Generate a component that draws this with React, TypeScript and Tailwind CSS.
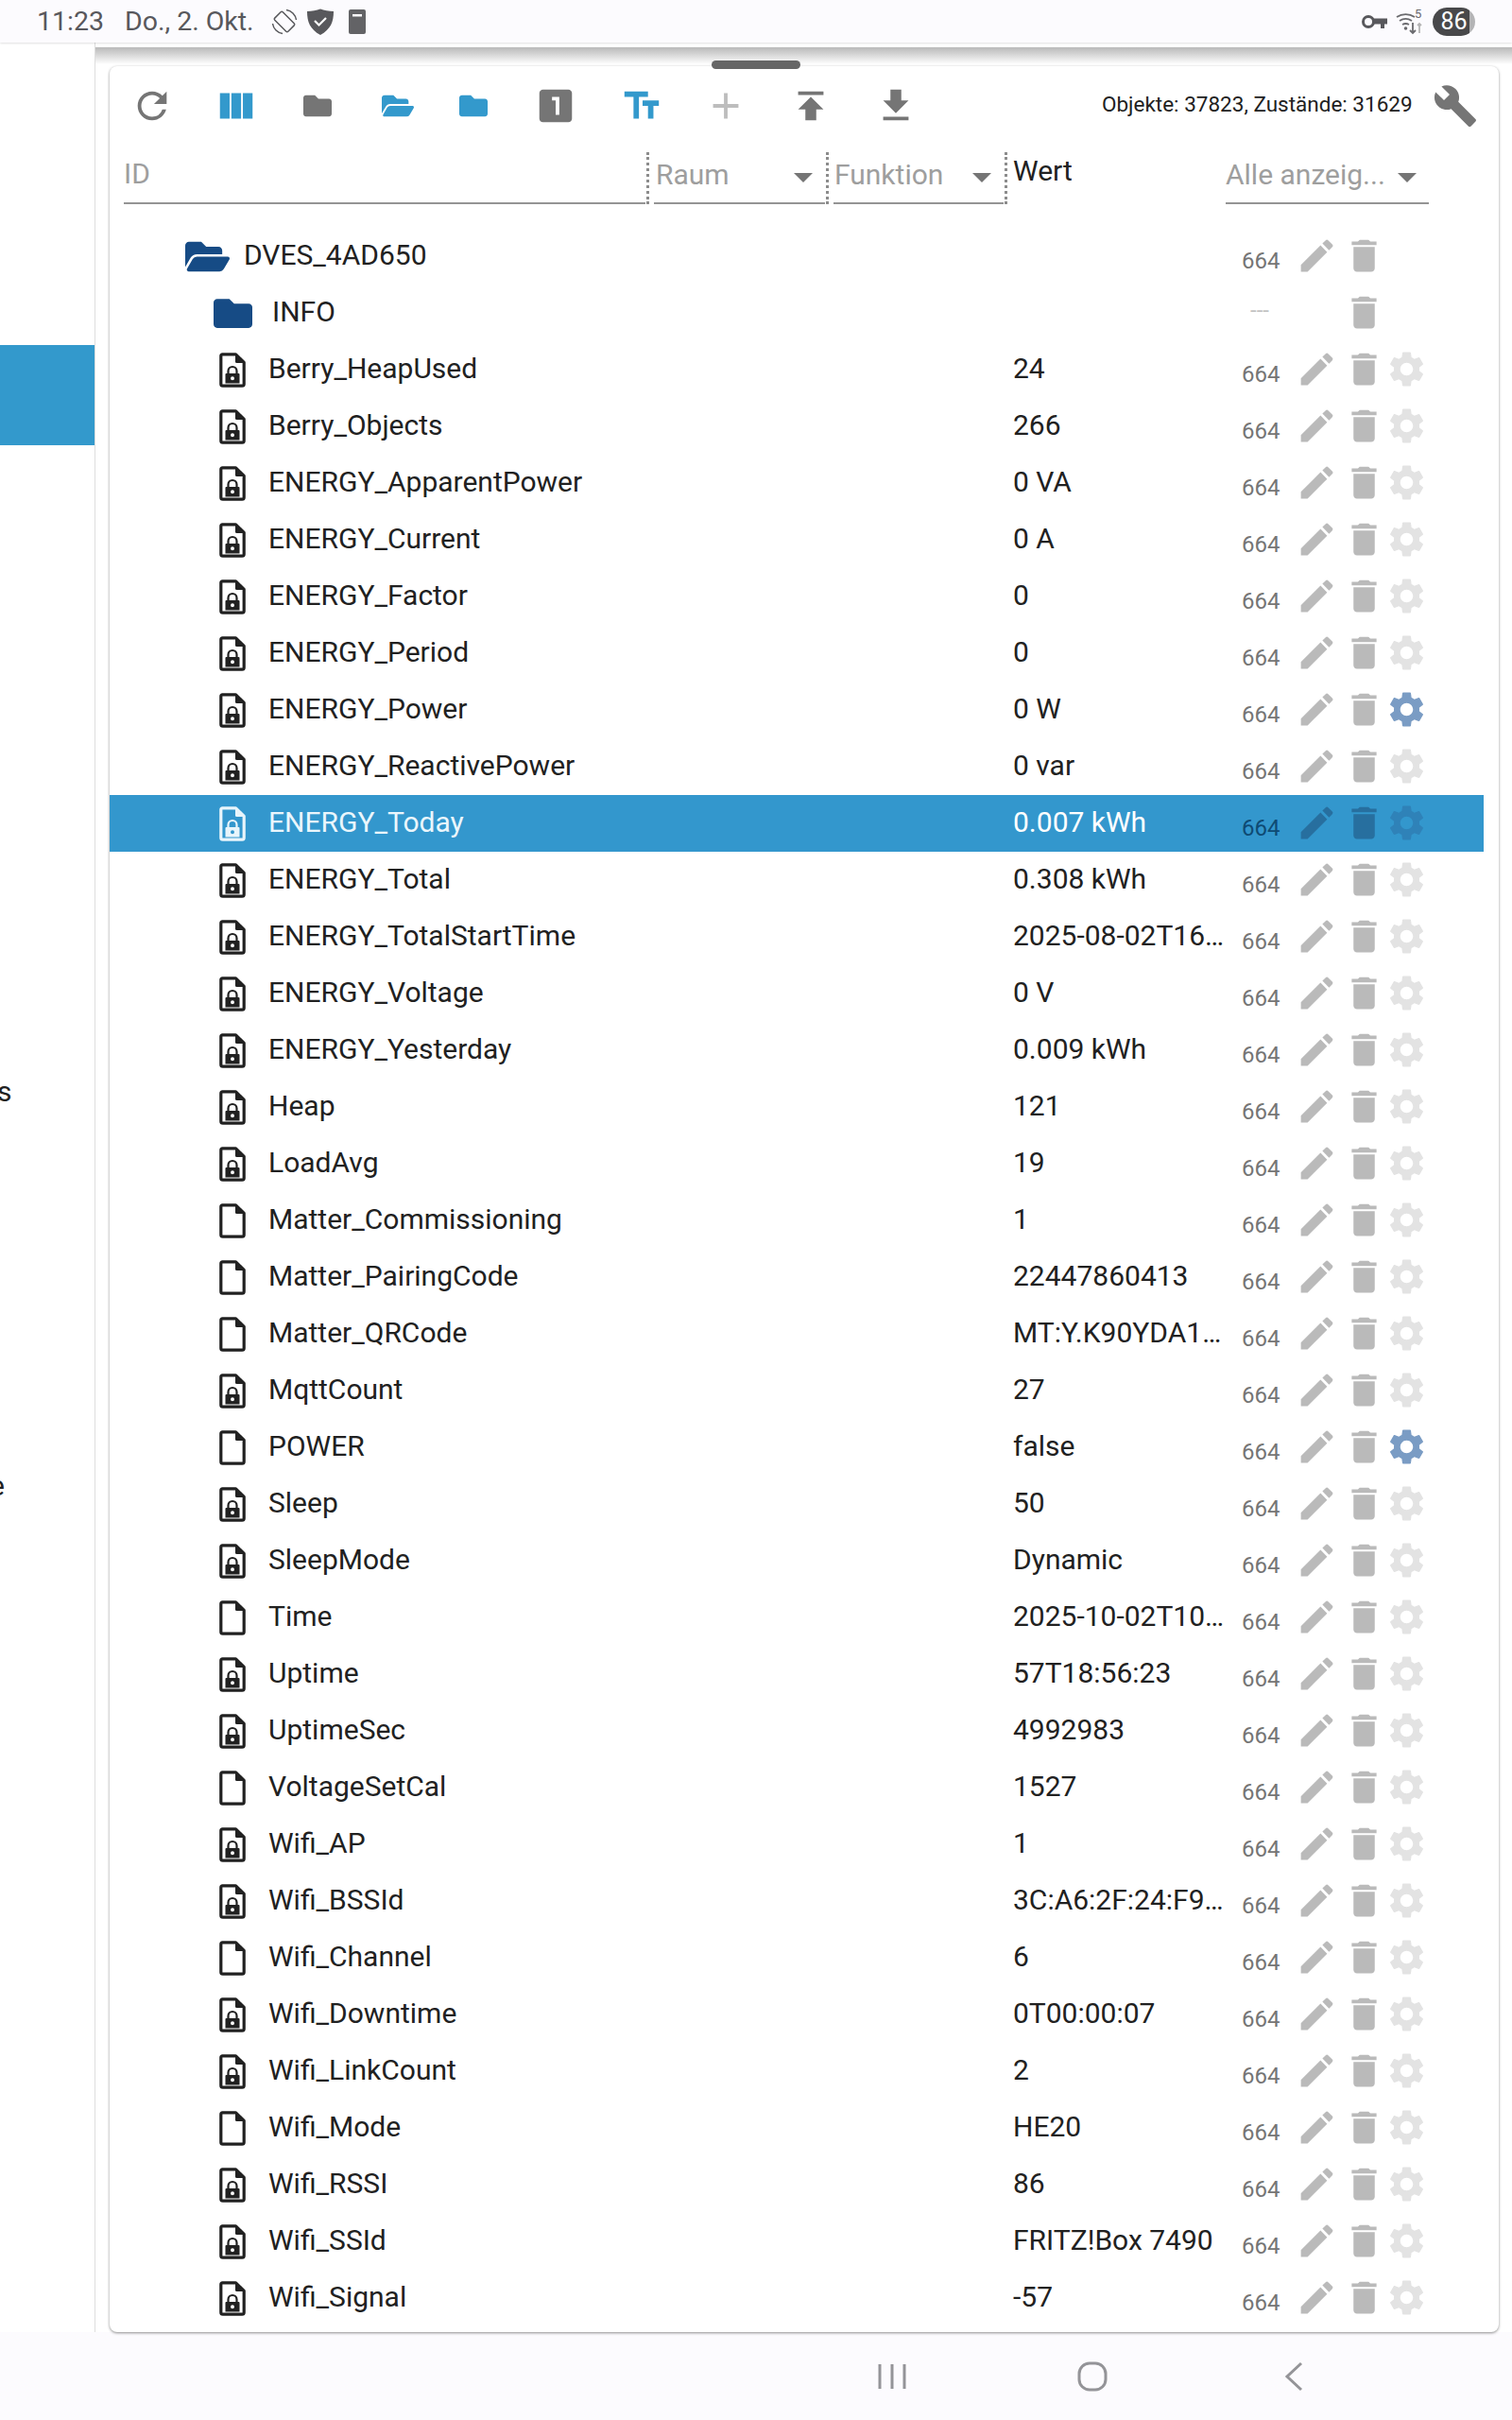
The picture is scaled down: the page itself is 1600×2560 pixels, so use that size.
import React from "react";
import { FaFolder, FaFolderOpen } from "react-icons/fa";
import {
  MdRefresh,
  MdViewColumn,
  MdLooksOne,
  MdTextFields,
  MdAdd,
  MdPublish,
  MdGetApp,
  MdBuild,
  MdEdit,
  MdDelete,
  MdSettings,
} from "react-icons/md";

type Row = { name: string; value: string; locked?: boolean; active?: boolean; selected?: boolean };

const rows: Row[] = [
  { name: "Berry_HeapUsed", value: "24", locked: true },
  { name: "Berry_Objects", value: "266", locked: true },
  { name: "ENERGY_ApparentPower", value: "0 VA", locked: true },
  { name: "ENERGY_Current", value: "0 A", locked: true },
  { name: "ENERGY_Factor", value: "0", locked: true },
  { name: "ENERGY_Period", value: "0", locked: true },
  { name: "ENERGY_Power", value: "0 W", locked: true, active: true },
  { name: "ENERGY_ReactivePower", value: "0 var", locked: true },
  { name: "ENERGY_Today", value: "0.007 kWh", locked: true, selected: true },
  { name: "ENERGY_Total", value: "0.308 kWh", locked: true },
  { name: "ENERGY_TotalStartTime", value: "2025-08-02T16:21:07", locked: true },
  { name: "ENERGY_Voltage", value: "0 V", locked: true },
  { name: "ENERGY_Yesterday", value: "0.009 kWh", locked: true },
  { name: "Heap", value: "121", locked: true },
  { name: "LoadAvg", value: "19", locked: true },
  { name: "Matter_Commissioning", value: "1" },
  { name: "Matter_PairingCode", value: "22447860413" },
  { name: "Matter_QRCode", value: "MT:Y.K90YDA10KL00000000" },
  { name: "MqttCount", value: "27", locked: true },
  { name: "POWER", value: "false", active: true },
  { name: "Sleep", value: "50", locked: true },
  { name: "SleepMode", value: "Dynamic", locked: true },
  { name: "Time", value: "2025-10-02T10:23:41" },
  { name: "Uptime", value: "57T18:56:23", locked: true },
  { name: "UptimeSec", value: "4992983", locked: true },
  { name: "VoltageSetCal", value: "1527" },
  { name: "Wifi_AP", value: "1", locked: true },
  { name: "Wifi_BSSId", value: "3C:A6:2F:24:F9:1D", locked: true },
  { name: "Wifi_Channel", value: "6" },
  { name: "Wifi_Downtime", value: "0T00:00:07", locked: true },
  { name: "Wifi_LinkCount", value: "2", locked: true },
  { name: "Wifi_Mode", value: "HE20" },
  { name: "Wifi_RSSI", value: "86", locked: true },
  { name: "Wifi_SSId", value: "FRITZ!Box 7490", locked: true },
  { name: "Wifi_Signal", value: "-57", locked: true },
];

function FileIcon({ locked, color }: { locked?: boolean; color: string }) {
  return (
    <svg width="28" height="37" viewBox="0 0 28 37" fill="none" className="shrink-0">
      <path d="M3.5 1.8H17.5L26.2 10.5V33.2a2 2 0 0 1-2 2H3.8a2 2 0 0 1-2-2V3.5a1.8 1.8 0 0 1 1.7-1.7z" stroke={color} strokeWidth="3.2" strokeLinejoin="round" />
      <path d="M17 2.5L25.5 11H18.5a1.5 1.5 0 0 1-1.5-1.5z" fill={color} />
      {locked && (
        <g>
          <path d="M9.500 23v-3.500a4.500 4.500 0 0 1 9 0V23" stroke={color} strokeWidth="2.200" />
          <path fillRule="evenodd" clipRule="evenodd" d="M7.500 22h13a1 1 0 0 1 1 1v9.500h-15V23a1 1 0 0 1 1-1zM14 25.200a2 2 0 1 0 0 4a2 2 0 1 0 0-4z" fill={color} />
        </g>
      )}
    </svg>
  );
}

function RowIcons({ selected, active, pencil = true, gear = true }: { selected?: boolean; active?: boolean; pencil?: boolean; gear?: boolean }) {
  const pencilColor = selected ? "text-[#276f9f]" : "text-[#bababa]";
  const gearColor = selected ? "text-[#2f82b8]" : active ? "text-[#7a9cc4]" : "text-[#e3e3e3]";
  return (
    <div className="flex items-center pb-[2px]">
      <div className="w-[50px] h-[45px] shrink-0">{pencil && <MdEdit size={45} className={pencilColor} />}</div>
      <div className="w-[45px] h-[45px] shrink-0">
        <MdDelete size={45} className={pencilColor} />
      </div>
      <div className="w-[45px] h-[45px] shrink-0">{gear && <MdSettings size={45} className={gearColor} />}</div>
    </div>
  );
}

function StateRow({ row }: { row: Row }) {
  const sel = row.selected;
  return (
    <div className={`flex items-center h-[60px] w-[1454px] ${sel ? "bg-[#3397cd]" : ""}`}>
      <div className={`flex items-center w-[956px] pl-[116px] gap-[24px] text-[30px] ${sel ? "text-[#eaf6fc]" : "text-[#212121]"}`}>
        <FileIcon locked={row.locked} color={sel ? "#e8f5fb" : "#212121"} />
        <span className="pb-[3px]">{row.name}</span>
      </div>
      <div className={`w-[228px] pb-[3px] truncate text-[30px] ${sel ? "text-[#ffffff]" : "text-[#212121]"}`}>{row.value}</div>
      <div className={`w-[71px] pl-[14px] pt-[10px] text-[24px] ${sel ? "text-[#0e4a73]" : "text-[#757575]"}`}>664</div>
      <RowIcons selected={sel} active={row.active} />
    </div>
  );
}

function FilterArrow() {
  return <div className="w-0 h-0 border-l-[10px] border-r-[10px] border-t-[10px] border-l-transparent border-r-transparent border-t-[#757575]" />;
}

function Dots() {
  return <div className="w-[3px] h-[55px] border-l-[3px] border-dotted border-[#8c8c8c] shrink-0 ml-[1px] mr-[5px]" />;
}

export default function App() {
  return (
    <div className="relative flex flex-col w-[1600px] h-[2560px] overflow-hidden bg-white font-['Roboto',sans-serif]">
      <div className="relative z-20 flex items-center h-[45px] shrink-0 bg-[#fcfbfe] text-[#58585c] shadow-[0_1px_2px_rgba(0,0,0,0.12)]">
        <span className="ml-[39px] text-[28.5px] leading-[45px]">11:23</span>
        <span className="ml-[22px] text-[28.5px] leading-[45px]">Do., 2. Okt.</span>
        <svg width="28" height="28" viewBox="0 0 28 28" fill="none" stroke="#58585c" strokeWidth="1.5" className="ml-[18px]">
          <rect x="8" y="4" width="12" height="20" rx="1.500" transform="rotate(-45 14 14)" />
          <path d="M16 1.500a12.500 12.500 0 0 1 10.500 10.500M12 26.500A12.500 12.500 0 0 1 1.500 16" />
        </svg>
        <svg width="28" height="28" viewBox="0 0 28 28" className="ml-[10px]">
          <path d="M14 0.500C18 2 23 3 28 3c0 11-3 19-14 25C3 22 0 14 0 3 5 3 10 2 14 0.500z" fill="#58585c" />
          <path d="M8 13l4.500 4.500L20 10" fill="none" stroke="#ffffff" strokeWidth="2.200" />
        </svg>
        <svg width="18" height="26" viewBox="0 0 18 26" className="ml-[16px]">
          <path d="M2 0h14a2 2 0 0 1 2 2v22a2 2 0 0 1-2 2H2a2 2 0 0 1-2-2V2a2 2 0 0 1 2-2z" fill="#636366" />
          <rect x="4" y="5" width="10" height="2.500" fill="#fcfbfe" />
        </svg>
        <div className="ml-auto flex items-center">
          <svg width="27" height="16" viewBox="0 0 27 16" fill="none" className="mr-[9px]">
            <circle cx="7" cy="8" r="5.500" stroke="#58585c" strokeWidth="3" />
            <path d="M12 4.500H27V10.500H24V15H20V10.500H12z" fill="#58585c" />
          </svg>
          <svg width="30" height="30" viewBox="0 0 30 30" fill="none" stroke="#6a6a6e" strokeWidth="1.800" className="mr-[9px]">
            <path d="M1 10a17 17 0 0 1 19 0M4 14a12 12 0 0 1 13 0M7 18a7 7 0 0 1 7 0" />
            <circle cx="10.500" cy="22" r="1.800" fill="#6a6a6e" stroke="none" />
            <path d="M18 16v11M15 24l3 3 3-3" />
            <path d="M25 27V17M23 19l2-2 2 2" stroke="#b5b5b5" />
            <text x="20" y="11" fontSize="13" fill="#6a6a6e" stroke="none" fontFamily="Roboto">5</text>
          </svg>
          <div className="w-[45px] h-[30px] mr-[39px] rounded-[15px] bg-[linear-gradient(90deg,#48484a_86%,#b4b4b6_86%)] text-[#ffffff] text-[25px] leading-[30px] text-center">86</div>
        </div>
      </div>

      <div className="flex flex-1 min-h-0 relative">
        <div className="w-[101px] shrink-0 border-r-[1.5px] border-[#dedede] overflow-hidden text-[30px] text-[#212121] leading-[36px]">
          <div className="h-[106px] mt-[320px] bg-[#3399cc]" />
          <div className="mt-[666px] ml-[-3px]">s</div>
          <div className="mt-[381px] ml-[-11px]">e</div>
        </div>

        <div className="absolute left-[101px] right-0 top-[5px] h-[18px] bg-gradient-to-b from-[#b9b9b9] to-[#ffffff]" />

        <div className="relative mt-[25px] ml-[15px] w-[1470px] h-[2397px] rounded-[8px] bg-white shadow-[0_1px_3px_rgba(0,0,0,0.45)]">
          <div className="absolute left-[637px] top-[-6px] w-[94px] h-[9px] rounded-full bg-[#666666]" />

          <div className="flex items-center h-[84px]">
            <div className="w-[89px] flex justify-center"><MdRefresh size={46} className="text-[#757575]" /></div>
            <div className="w-[90px] flex justify-center"><MdViewColumn size={46} className="text-[#3399cc]" /></div>
            <div className="w-[82px] flex justify-center"><FaFolder size={30} className="text-[#757575]" /></div>
            <div className="w-[88px] flex justify-center"><FaFolderOpen size={34} className="text-[#3399cc]" /></div>
            <div className="w-[72px] flex justify-center"><FaFolder size={30} className="text-[#3399cc]" /></div>
            <div className="w-[102px] flex justify-center"><MdLooksOne size={46} className="text-[#757575]" /></div>
            <div className="w-[79px] flex justify-center"><MdTextFields size={46} className="text-[#3399cc]" /></div>
            <div className="w-[100px] flex justify-center"><MdAdd size={46} className="text-[#bdbdbd]" /></div>
            <div className="w-[80px] flex justify-center"><MdPublish size={46} className="text-[#757575]" /></div>
            <div className="w-[100px] flex justify-center"><MdGetApp size={46} className="text-[#757575]" /></div>
            <div className="ml-[168px] pb-[2px] text-[22.5px] text-[#212121]">Objekte: 37823, Zustände: 31629</div>
            <MdBuild size={48} className="ml-[21px] text-[#757575]" />
          </div>

          <div className="flex items-end h-[62px] pl-[15px] text-[30px] text-[#9e9e9e]">
            <div className="w-[552px] h-[55px] border-b-2 border-[#949494]">ID</div>
            <Dots />
            <div className="flex items-center justify-between w-[181px] h-[55px] pl-[2px] pr-[13px] border-b-2 border-[#949494]">
              <span className="pb-[6px]">Raum</span>
              <FilterArrow />
            </div>
            <Dots />
            <div className="flex items-center justify-between w-[180px] h-[55px] pl-[1px] pr-[13px] border-b-2 border-[#949494]">
              <span className="pb-[6px]">Funktion</span>
              <FilterArrow />
            </div>
            <Dots />
            <div className="self-start mt-[4px] pl-[1px] w-[226px] text-[#212121]">Wert</div>
            <div className="flex items-center justify-between w-[215px] h-[55px] pr-[13px] border-b-2 border-[#949494]">
              <span className="pb-[6px]">Alle anzeig...</span>
              <FilterArrow />
            </div>
          </div>

          <div className="mt-[25px]">
            <div className="flex items-center h-[60px] w-[1454px]">
              <div className="flex items-center w-[1184px] pl-[80px] gap-[15px] text-[30px] text-[#212121]">
                <FaFolderOpen size={47} className="text-[#164b85]" />
                <span className="pb-[3px]">DVES_4AD650</span>
              </div>
              <div className="w-[71px] pl-[14px] pt-[10px] text-[24px] text-[#757575]">664</div>
              <RowIcons gear={false} />
            </div>
            <div className="flex items-center h-[60px] w-[1454px]">
              <div className="flex items-center w-[1184px] pl-[110px] gap-[21px] text-[30px] text-[#212121]">
                <FaFolder size={41} className="text-[#164b85]" />
                <span className="pb-[3px]">INFO</span>
              </div>
              <div className="w-[71px] pl-[23px] pb-[6px] text-[24px] text-[#c4c4c4]">---</div>
              <RowIcons pencil={false} gear={false} />
            </div>
            {rows.map((r) => (
              <StateRow key={r.name} row={r} />
            ))}
          </div>
        </div>
      </div>

      <div className="flex items-center h-[93px] shrink-0 bg-[#fcfbfe]">
        <svg width="30" height="30" viewBox="0 0 30 30" className="ml-[929px]" stroke="#949498" strokeWidth="3">
          <path d="M2 2V28M15 2V28M28 2V28" />
        </svg>
        <svg width="32" height="32" viewBox="0 0 32 32" fill="none" stroke="#949498" strokeWidth="3" className="ml-[181px]">
          <rect x="2" y="2" width="28" height="28" rx="11" />
        </svg>
        <svg width="20" height="32" viewBox="0 0 20 32" fill="none" stroke="#949498" strokeWidth="3" className="ml-[187px]">
          <path d="M18 2L3 16l15 14" />
        </svg>
      </div>
    </div>
  );
}
